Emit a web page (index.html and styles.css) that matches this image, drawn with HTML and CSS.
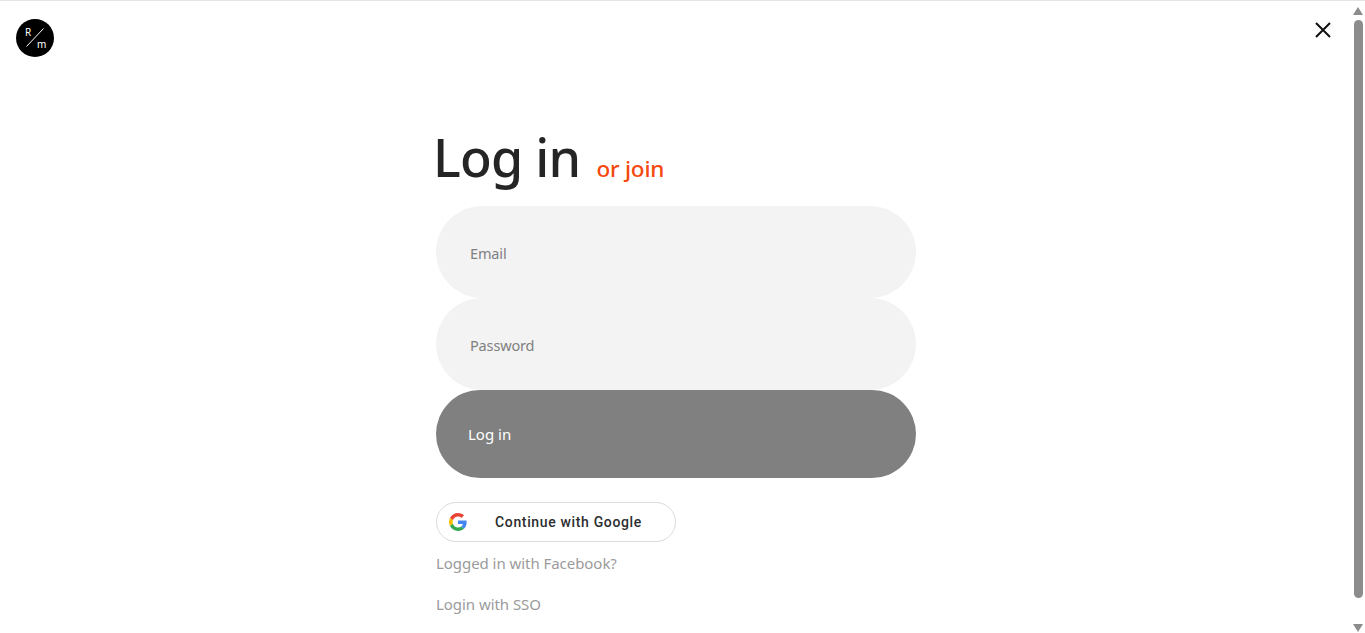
FILE: index.html
```html
<!DOCTYPE html>
<html>
<head>
    <title>Log in</title>
    <link rel="stylesheet" href="styles.css">
</head>
<body>
    <div class="page">
        <header class="top-bar">
            <div class="logo">
                <span class="logo-r">R</span>
                <span class="logo-m">m</span>
                <svg class="logo-slash" width="38" height="38" viewBox="0 0 38 38">
                    <line x1="10.5" y1="27.5" x2="27.5" y2="9.5" stroke="#fff" stroke-width="1"/>
                </svg>
            </div>
            <button class="close-btn" aria-label="Close">
                <svg width="16" height="16" viewBox="0 0 16 16">
                    <path d="M1 1 L15 15 M15 1 L1 15" stroke="#111" stroke-width="2" fill="none"/>
                </svg>
            </button>
        </header>

        <main class="login">
            <div class="login-title">
                <h1>Log in</h1>
                <a class="join-link" href="#">or join</a>
            </div>

            <div class="field">Email</div>
            <div class="field">Password</div>
            <button class="submit-btn">Log in</button>

            <button class="google-btn">
                <svg class="google-icon" width="18" height="18" viewBox="0 0 48 48">
                    <path fill="#EA4335" d="M24 9.5c3.54 0 6.71 1.22 9.21 3.6l6.85-6.85C35.9 2.38 30.47 0 24 0 14.62 0 6.51 5.38 2.56 13.22l7.98 6.19C12.43 13.72 17.74 9.5 24 9.5z"/>
                    <path fill="#4285F4" d="M46.98 24.55c0-1.57-.15-3.09-.38-4.55H24v9.02h12.94c-.58 2.96-2.26 5.48-4.78 7.18l7.73 6c4.51-4.18 7.09-10.36 7.09-17.65z"/>
                    <path fill="#FBBC05" d="M10.53 28.59c-.48-1.45-.76-2.99-.76-4.59s.27-3.14.76-4.59l-7.98-6.19C.92 16.46 0 20.12 0 24c0 3.88.92 7.54 2.56 10.78l7.97-6.19z"/>
                    <path fill="#34A853" d="M24 48c6.48 0 11.93-2.13 15.89-5.81l-7.73-6c-2.15 1.45-4.92 2.3-8.16 2.3-6.26 0-11.57-4.22-13.47-9.91l-7.98 6.19C6.51 42.62 14.62 48 24 48z"/>
                </svg>
                <span class="google-label">Continue with Google</span>
            </button>

            <a class="alt-link" href="#">Logged in with Facebook?</a>
            <a class="alt-link alt-link-sso" href="#">Login with SSO</a>
        </main>
    </div>

    <!-- scrollbar -->
    <div class="scrollbar">
        <span class="scroll-arrow-up"></span>
        <span class="scroll-thumb"></span>
        <span class="scroll-arrow-down"></span>
    </div>
</body>
</html>
```

FILE: styles.css
```css
html, body { margin: 0; padding: 0; height: 100%; overflow: hidden; background: #fff; }
body { font-family: "Noto Sans", "Open Sans", Arial, sans-serif; border-top: 1px solid #e4e4e4; box-sizing: border-box; }
button { font-family: inherit; border: none; cursor: pointer; padding: 0; }
a { text-decoration: none; }

.page { width: 1350px; }

.top-bar { display: flex; justify-content: space-between; align-items: flex-start; padding: 18px 19px 0 16px; height: 57px; box-sizing: border-box; }
.logo { position: relative; width: 38px; height: 38px; border-radius: 50%; background: #000; color: #fff; font-size: 10px; line-height: 10px; }
.logo-r { position: absolute; left: 9px; top: 8px; }
.logo-m { position: absolute; left: 21px; top: 20px; }
.logo-slash { position: absolute; left: 0; top: 0; }
.close-btn { background: none; width: 16px; height: 16px; margin-top: 3px; }

.login { width: 480px; margin-left: 436px; padding-top: 64px; }
.login-title { display: flex; align-items: baseline; gap: 16px; margin-left: -3px; height: 84px; }
.login-title h1 { margin: 0; font-size: 52px; font-weight: 500; line-height: 69px; color: #252525; letter-spacing: -0.75px; }
.join-link { font-size: 22.5px; font-weight: 500; color: #f4480f; letter-spacing: -0.2px; }

.field { height: 92px; border-radius: 46px; background: #f3f3f3; color: #808080; font-size: 14.5px; display: flex; align-items: center; padding: 2px 34px 0; box-sizing: border-box; letter-spacing: -0.15px; }

.submit-btn { display: block; width: 100%; height: 88px; border-radius: 44px; background: #808080; color: #fff; font-size: 15px; text-align: left; padding-left: 32px; }

.google-btn { display: flex; align-items: center; width: 240px; height: 40px; margin-top: 24px; background: #fff; border: 1px solid #dadce0; border-radius: 20px; box-sizing: border-box; padding-left: 12px; font-family: Roboto, Arial, sans-serif; }
.google-label { font-size: 14px; font-weight: 500; color: #2b2d30; margin-left: 28px; letter-spacing: 0.65px; }

.alt-link { display: block; color: #9b9b9b; font-size: 15px; line-height: 20px; margin-top: 11px; letter-spacing: -0.05px; }
.alt-link-sso { margin-top: 21px; }

.scrollbar { position: absolute; top: 1px; right: 0; width: 15px; height: 632px; background: #fff; }
.scroll-thumb { position: absolute; left: 4px; top: 19px; width: 9px; height: 578px; border-radius: 5px; background: #8c8c8c; }
.scroll-arrow-up { position: absolute; left: 3px; top: 6px; border-left: 5.5px solid transparent; border-right: 5.5px solid transparent; border-bottom: 8px solid #8c8c8c; }
.scroll-arrow-down { position: absolute; left: 3px; bottom: 1px; border-left: 5.5px solid transparent; border-right: 5.5px solid transparent; border-top: 8px solid #8c8c8c; }
```
